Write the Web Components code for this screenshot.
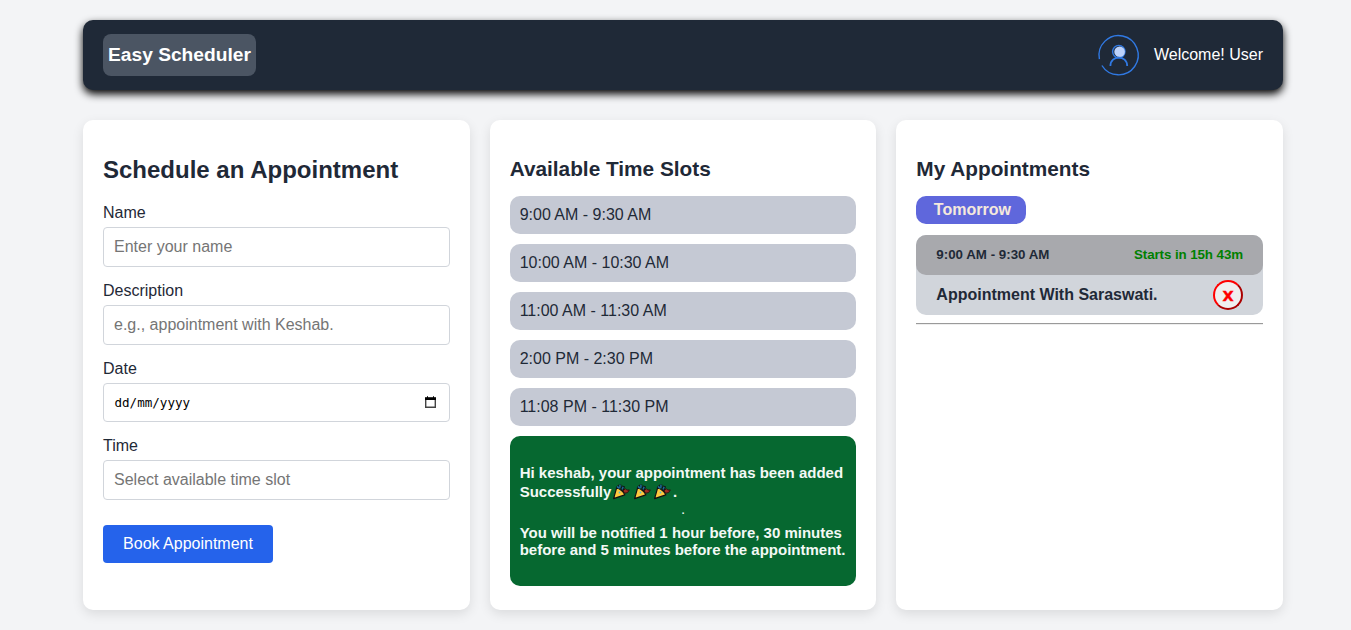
<!DOCTYPE html>
<html lang="en">
<head>
<meta charset="utf-8">
<title>Easy Scheduler</title>
<style>
html,body{margin:0;height:630px;overflow:hidden}
body{background:#f3f4f6;color:#1f2937;font:16px/18px "Liberation Sans",Arial,sans-serif}
</style>
</head>
<body>
<scheduler-app></scheduler-app>
<script>
const define = (name, html) => {
  const template = document.createElement('template');
  template.innerHTML = html;
  customElements.define(name, class extends HTMLElement {
    constructor() {
      super();
      this.attachShadow({mode: 'open'}).append(template.content.cloneNode(true));
    }
  });
};

define('user-avatar', `
<style>:host{display:block;width:42px;height:42px;margin-top:2px}svg{display:block;overflow:visible}</style>
<svg width="42" height="42" viewBox="0 0 42 42" fill="none" stroke="#3079e3">
  <path d="M1.4 24.2A19.6 19.6 0 1 1 3.9 30.5" stroke-width="1.4"/>
  <circle cx="20.8" cy="16.6" r="6.2" stroke-width="1.4"/>
  <circle cx="21.6" cy="16.8" r="5.3" fill="#bcd2fb" stroke="none"/>
  <path d="M12.4 31C12.4 19.7 29.2 19.7 29.2 31" stroke-width="1.8"/>
</svg>`);

define('app-header', `
<style>
:host{display:flex;align-items:center;justify-content:space-between;box-sizing:border-box;height:70px;padding:0 20px;border-radius:10px;background:#1f2937;color:#fff;box-shadow:0 4px 8px #000}
.brand{box-sizing:border-box;width:153px;height:42px;padding:0 5px;border-radius:8px;background:#4b5563;font-weight:bold;font-size:19.2px;line-height:42px;white-space:nowrap}
.user{display:flex;align-items:center;gap:14px}
</style>
<div class="brand">Easy Scheduler</div>
<div class="user"><user-avatar></user-avatar><span>Welcome! User</span></div>`);

define('panel-card', `
<style>
:host{display:block;box-sizing:border-box;height:490px;padding:36px 20px 0;border-radius:10px;background:#fff;box-shadow:0 4px 12px rgba(0,0,0,.1)}
</style><slot></slot>`);

define('form-field', `
<style>
:host{display:block;margin-bottom:14px}
.label{height:18px;margin-bottom:6px;line-height:20px}
.box{display:flex;align-items:center;justify-content:space-between;box-sizing:border-box;height:40px;padding:0 10px;border:1px solid #d1d5db;border-radius:4px;color:#757575}
:host([kind=date]) .box{height:39px;color:#000;font:12.55px "DejaVu Sans Mono",monospace;padding:0 12px 0 10.5px}
</style>
<div class="label"><slot name="label"></slot></div>
<div class="box"><slot></slot></div>`);

define('calendar-icon', `
<style>:host,svg{display:block}</style>
<svg width="13" height="13" viewBox="0 0 13 13"><path d="M1.7 2.5h9.6v8.7H1.7z" fill="none" stroke="#444" stroke-width="1.4"/><path d="M1 1.3h11V4H1zM3 .3h1v2H3zM9 .3h1v2H9z"/></svg>`);

define('booking-form', `
<style>
:host{display:block}
h2{margin:0 0 19px;font-size:24px;line-height:28px;white-space:nowrap}
.book{width:170px;height:38px;margin-top:25px;padding:0;border:0;border-radius:4px;background:#2563eb;color:#fff;font:inherit}
</style>
<h2>Schedule an Appointment</h2>
<form-field><span slot="label">Name</span>Enter your name</form-field>
<form-field><span slot="label">Description</span>e.g., appointment with Keshab.</form-field>
<form-field kind="date"><span slot="label">Date</span><span>dd/mm/yyyy</span><calendar-icon></calendar-icon></form-field>
<form-field style="margin:0"><span slot="label">Time</span>Select available time slot</form-field>
<button class="book">Book Appointment</button>`);

define('time-slot', `
<style>:host{display:block;height:38px;margin-bottom:10px;padding-left:10px;border-radius:10px;background:#c5c9d4;line-height:37px}</style><slot></slot>`);

define('party-popper', `
<style>:host{display:inline-block;width:20.5px;height:17px;vertical-align:-3px}svg{display:block}</style>
<svg width="19" height="17" viewBox="0 0 19 17">
  <path d="M2.6 15.6 5.6 4.8Q12 7.3 13.8 11.9Z" fill="#ffc83d" stroke="#111" stroke-width="1.2" stroke-linejoin="round"/>
  <path d="M7.5 5 5.8 3.2M9.2 5.5 8.8 1.6M11 7.5 12.6 3" stroke="#111" stroke-width="3"/>
  <path d="M6 3.5 8.5 5.4M9 4.7 8.9 1.7M11.1 6.5 12.1 3.8" stroke="#1b6a94" stroke-width="1.6"/>
  <path d="m12 7.7 2.4-2 1.4 1.4 2.5-.2-1.7 2.7-3 .6z" fill="#9b2c20" stroke="#30100d" stroke-width=".9"/>
  <circle cx="8.5" cy="9.5" r=".9" fill="#57bccc"/>
</svg>`);

define('success-notice', `
<style>
:host{display:block;box-sizing:border-box;height:150px;padding:27px 10px 0;border-radius:10px;background:#066830;color:#f3f9f5;font-weight:bold;font-size:15px;line-height:17px;white-space:nowrap}
.added div{height:19px;line-height:19px}
.dot{height:18px;text-align:center;font-weight:normal;line-height:15px}
.notify{margin-top:5px}
</style>
<div class="added"><div>Hi keshab, your appointment has been added</div><div>Successfully<party-popper></party-popper><party-popper></party-popper><party-popper></party-popper>.</div></div>
<div class="dot">.</div>
<div class="notify">You will be notified 1 hour before, 30 minutes<br>before and 5 minutes before the appointment.</div>`);

define('slot-list', `
<style>:host{display:block}h3{margin:0 0 15px;font-size:20.8px;line-height:24px;white-space:nowrap}</style>
<h3>Available Time Slots</h3>
<time-slot>9:00 AM - 9:30 AM</time-slot>
<time-slot>10:00 AM - 10:30 AM</time-slot>
<time-slot>11:00 AM - 11:30 AM</time-slot>
<time-slot>2:00 PM - 2:30 PM</time-slot>
<time-slot>11:08 PM - 11:30 PM</time-slot>
<success-notice></success-notice>`);

define('appointment-item', `
<style>
:host{display:block;height:80px;border-radius:10px;background:#d1d5db;font-weight:bold}
.row{display:flex;align-items:center;justify-content:space-between;box-sizing:border-box;height:40px;padding:0 20px}
.time{border-radius:10px;background:#a8a9ad;font-size:13.33px}
.starts{color:#008000;letter-spacing:-.08px}
button{width:30px;height:30px;padding:2px 0 0;border:2px outset #f00;border-radius:50%;background:#efefef;color:#f00;font:bold 14.5px/24px "DejaVu Sans",sans-serif;-webkit-text-stroke:.4px #f00}
</style>
<div class="row time"><slot name="time"></slot><span class="starts"><slot name="starts"></slot></span></div>
<div class="row"><span class="title"><slot></slot></span><button>X</button></div>`);

define('my-appointments', `
<style>
:host{display:block}
h3{margin:0 0 15px;font-size:20.8px;line-height:24px;white-space:nowrap}
.day{width:110px;height:28px;margin-bottom:11px;padding-left:2px;box-sizing:border-box;border-radius:10px;background:#5f67dc;color:#f5e9dc;font-weight:bold;line-height:27px;text-align:center}
hr{margin:8px 0 0;border:solid;border-width:1px 0;border-color:#9a9a9a #eee #eee #9a9a9a}
</style>
<h3>My Appointments</h3>
<div class="day">Tomorrow</div>
<appointment-item><span slot="time">9:00 AM - 9:30 AM</span><span slot="starts">Starts in 15h 43m</span>Appointment With Saraswati.</appointment-item>
<hr>`);

define('scheduler-app', `
<style>
:host{display:block;width:1200px;padding:20px 0 0 83px}
main{display:grid;grid-template-columns:repeat(3,1fr);gap:20px;margin-top:30px}
</style>
<app-header></app-header>
<main>
<panel-card><booking-form></booking-form></panel-card>
<panel-card style="padding-top:37px"><slot-list></slot-list></panel-card>
<panel-card style="padding-top:37px"><my-appointments></my-appointments></panel-card>
</main>`);
</script>
</body>
</html>
